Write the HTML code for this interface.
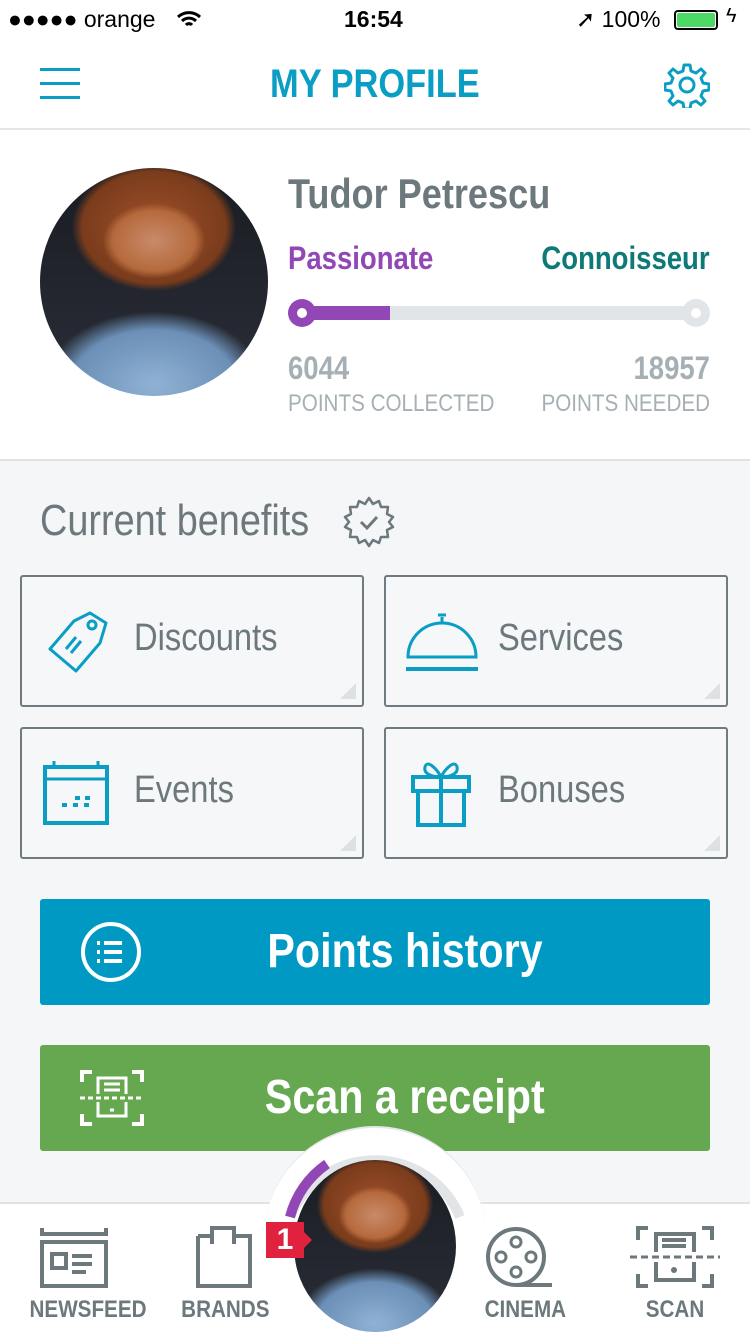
<!DOCTYPE html>
<html><head><meta charset="utf-8"><style>
*{margin:0;padding:0;box-sizing:border-box}
html,body{width:750px;height:1334px;overflow:hidden}
body{background:#f4f6f8;font-family:"Liberation Sans",sans-serif;position:relative;color:#6c787c}
.a{position:absolute}
.n{display:inline-block;transform:scaleX(.86);transform-origin:left center;white-space:nowrap}
.nr{display:inline-block;transform:scaleX(.86);transform-origin:right center;white-space:nowrap}
.nc{display:inline-block;transform:scaleX(.86);transform-origin:center;white-space:nowrap}
.sb{font-family:"Liberation Sans",sans-serif;font-size:23px;color:#000}
.av{border-radius:50%;background:radial-gradient(ellipse 30% 22% at 50% 32%,#c98a6a 0,#b56a3c 60%,transparent 75%),radial-gradient(ellipse 45% 35% at 50% 26%,#a0502a 0,#7a3c1c 70%,transparent 80%),radial-gradient(ellipse 60% 40% at 50% 95%,#8fb2d4 0,#6b8fb6 60%,transparent 80%),linear-gradient(#1a1c22,#2a2e38);overflow:hidden}
.card{position:absolute;width:344px;height:132px;border:2px solid #6f7b80;border-radius:3px;background:#f5f7f9}
.card span{position:absolute;left:112px;top:40px;font-size:38px;color:#6c787c}
.card:after{content:"";position:absolute;right:6px;bottom:6px;border-left:16px solid transparent;border-bottom:16px solid #dde1e4}
.card svg{position:absolute}
.btn{position:absolute;left:40px;width:670px;height:106px;border-radius:3px;color:#fff;font-size:48px;font-weight:bold;text-align:center;line-height:106px}
.tab{position:absolute;top:1296px;font-size:24px;color:#6c787c;text-align:center;font-weight:bold}
</style></head><body>
<div class="a" style="left:0;top:0;width:750px;height:128px;background:#fff"></div>
<!-- status bar -->
<div class="a sb" style="left:8px;top:6px">●●●●● orange</div>
<svg class="a" style="left:176px;top:10px" width="26" height="20" viewBox="0 0 26 20"><path d="M2 7a16 16 0 0 1 22 0M6 11a10 10 0 0 1 14 0M10 15a4 4 0 0 1 6 0" stroke="#000" stroke-width="3" fill="none"/></svg>
<div class="a sb" style="left:344px;top:6px;font-weight:bold">16:54</div>
<div class="a sb" style="left:576px;top:6px">➚ 100%</div>
<div class="a" style="left:674px;top:10px;width:44px;height:20px;border:2px solid #000;border-radius:4px;padding:1px"><div style="background:#4cd964;width:100%;height:100%;border-radius:2px"></div></div>
<div class="a sb" style="left:726px;top:5px;font-size:20px">ϟ</div>
<!-- nav -->
<div class="a" style="left:40px;top:68px;width:40px;height:3px;background:#0a9ec4;box-shadow:0 14px 0 #0a9ec4,0 28px 0 #0a9ec4"></div>
<div class="a" style="left:0;width:750px;top:62px;text-align:center;font-size:40px;font-weight:bold;color:#0a9ec4"><span class="nc">MY PROFILE</span></div>
<svg class="a" style="left:664px;top:62px" width="46" height="46" viewBox="0 0 46 46"><path d="M20 3h6l1 6 5 2 5-4 4 4-4 5 2 5 6 1v6l-6 1-2 5 4 5-4 4-5-4-5 2-1 6h-6l-1-6-5-2-5 4-4-4 4-5-2-5-6-1v-6l6-1 2-5-4-5 4-4 5 4 5-2z" fill="none" stroke="#0a9ec4" stroke-width="3" stroke-linejoin="round"/><circle cx="23" cy="23" r="7" fill="none" stroke="#0a9ec4" stroke-width="3"/></svg>
<!-- profile -->
<div class="a" style="left:0;top:128px;width:750px;height:333px;background:#fff;border-top:2px solid #e4e7ea;border-bottom:2px solid #e0e3e6"></div>
<div class="a av" style="left:40px;top:168px;width:228px;height:228px"></div>
<div class="a" style="left:288px;top:170px;font-size:42px;font-weight:bold;color:#6c787c"><span class="n">Tudor Petrescu</span></div>
<div class="a" style="left:288px;top:240px;font-size:32px;font-weight:bold;color:#9147b5"><span class="n">Passionate</span></div>
<div class="a" style="right:40px;top:240px;font-size:32px;font-weight:bold;color:#0e7a77"><span class="nr">Connoisseur</span></div>
<div class="a" style="left:300px;top:306px;width:396px;height:14px;background:#e2e5e8"></div>
<div class="a" style="left:300px;top:306px;width:90px;height:14px;background:#9147b5"></div>
<div class="a" style="left:288px;top:299px;width:28px;height:28px;border-radius:50%;background:#9147b5"><div style="margin:9px;width:10px;height:10px;background:#fff;border-radius:50%"></div></div>
<div class="a" style="left:682px;top:299px;width:28px;height:28px;border-radius:50%;background:#e2e5e8"><div style="margin:9px;width:10px;height:10px;background:#fff;border-radius:50%"></div></div>
<div class="a" style="left:288px;top:350px;font-size:32px;font-weight:bold;color:#a6b0b4"><span class="n">6044</span></div>
<div class="a" style="right:40px;top:350px;font-size:32px;font-weight:bold;color:#a6b0b4"><span class="nr">18957</span></div>
<div class="a" style="left:288px;top:390px;font-size:24px;color:#a6b0b4"><span class="n">POINTS COLLECTED</span></div>
<div class="a" style="right:40px;top:390px;font-size:24px;color:#a6b0b4"><span class="nr">POINTS NEEDED</span></div>
<!-- benefits -->
<div class="a" style="left:40px;top:496px;font-size:44px;color:#6c787c"><span class="n">Current benefits</span></div>
<svg class="a" style="left:342px;top:495px" width="54" height="54" viewBox="0 0 54 54"><path d="M27 3l4 6 6-3 2 6 7 0-1 7 6 3-4 5 4 5-6 3 1 7-7 0-2 6-6-3-4 6-4-6-6 3-2-6-7 0 1-7-6-3 4-5-4-5 6-3-1-7 7 0 2-6 6 3z" fill="none" stroke="#6c787c" stroke-width="2.5" stroke-linejoin="round"/><path d="M19 27l6 6 10-11" fill="none" stroke="#6c787c" stroke-width="3"/></svg>
<div class="card" style="left:20px;top:575px"><svg style="left:24px;top:32px" width="64" height="64" viewBox="0 0 64 64"><path d="M44 4l16 10-6 20-24 28-26-22 24-28z" fill="none" stroke="#0a9ec4" stroke-width="3" stroke-linejoin="round"/><circle cx="46" cy="16" r="4" fill="none" stroke="#0a9ec4" stroke-width="3"/><path d="M20 40l10-12M25 44l10-12" stroke="#0a9ec4" stroke-width="3"/></svg><span class="n">Discounts</span></div>
<div class="card" style="left:384px;top:575px"><svg style="left:18px;top:34px" width="76" height="64" viewBox="0 0 76 64"><path d="M34 4h8M38 6v6" stroke="#0a9ec4" stroke-width="3"/><path d="M4 46a34 34 0 0 1 68 0z" fill="none" stroke="#0a9ec4" stroke-width="3"/><path d="M2 58h72" stroke="#0a9ec4" stroke-width="4"/></svg><span class="n">Services</span></div>
<div class="card" style="left:20px;top:727px"><svg style="left:20px;top:32px" width="70" height="64" viewBox="0 0 70 64"><rect x="3" y="6" width="62" height="56" fill="none" stroke="#0a9ec4" stroke-width="4"/><path d="M3 18h62M12 0v8M56 0v8" stroke="#0a9ec4" stroke-width="3"/><path d="M20 44h5M31 44h5M42 44h5M33 37h5M43 37h5" stroke="#0a9ec4" stroke-width="4"/></svg><span class="n">Events</span></div>
<div class="card" style="left:384px;top:727px"><svg style="left:24px;top:30px" width="64" height="68" viewBox="0 0 64 68"><rect x="3" y="18" width="56" height="14" fill="none" stroke="#0a9ec4" stroke-width="4"/><rect x="8" y="32" width="46" height="34" fill="none" stroke="#0a9ec4" stroke-width="4"/><path d="M31 18v48" stroke="#0a9ec4" stroke-width="4"/><path d="M31 18c-4-8-14-18-16-10s10 10 16 10c6 0 18-2 16-10s-12 2-16 10" fill="none" stroke="#0a9ec4" stroke-width="3"/></svg><span class="n">Bonuses</span></div>
<!-- buttons -->
<div class="btn" style="top:899px;background:#0099c4;padding-left:60px"><span class="nc">Points history</span></div>
<svg class="a" style="left:80px;top:921px" width="62" height="62" viewBox="0 0 62 62"><circle cx="31" cy="31" r="28" fill="none" stroke="#fff" stroke-width="4"/><path d="M24 22h18M24 31h18M24 40h18" stroke="#fff" stroke-width="4"/><path d="M17 22h3M17 31h3M17 40h3" stroke="#fff" stroke-width="4"/></svg>
<div class="btn" style="top:1045px;background:#66a84f;padding-left:60px"><span class="nc">Scan a receipt</span></div>
<svg class="a" style="left:80px;top:1070px" width="64" height="56" viewBox="0 0 64 56"><path d="M2 12V2h10M52 2h10v10M2 44v10h10M52 54h10V44" fill="none" stroke="#fff" stroke-width="4"/><path d="M0 28h64" stroke="#fff" stroke-width="3" stroke-dasharray="5 3"/><path d="M18 24V8h28v16M18 32v14h28V32M24 14h16M24 20h16M30 40h4" fill="none" stroke="#fff" stroke-width="3"/></svg>
<!-- bottom tab -->
<div class="a" style="left:0;top:1202px;width:750px;height:132px;background:#fff;border-top:2px solid #e0e3e6"></div>
<div class="a" style="left:264px;top:1126px;width:222px;height:208px;border-radius:111px 111px 0 0;background:#fff;border-top:2px solid #e4e7ea"></div>
<svg class="a" style="left:270px;top:1132px" width="210" height="120" viewBox="0 0 210 120"><path d="M20 85A92 92 0 0 1 190 85" fill="none" stroke="#e2e5e8" stroke-width="10"/><path d="M20 85A92 92 0 0 1 57 32" fill="none" stroke="#9147b5" stroke-width="10"/></svg>
<div class="a av" style="left:294px;top:1160px;width:162px;height:172px"></div>
<div class="a" style="left:266px;top:1222px;width:38px;height:36px;background:#e0223f;color:#fff;font-weight:bold;font-size:30px;text-align:center;line-height:36px">1</div>
<div class="a" style="left:304px;top:1232px;border-left:8px solid #e0223f;border-top:8px solid transparent;border-bottom:8px solid transparent"></div>
<svg class="a" style="left:40px;top:1228px" width="68" height="60" viewBox="0 0 68 60"><path d="M2 0v6h64V0" fill="none" stroke="#6c787c" stroke-width="4"/><rect x="2" y="14" width="64" height="44" fill="none" stroke="#6c787c" stroke-width="4"/><rect x="12" y="26" width="14" height="14" fill="none" stroke="#6c787c" stroke-width="4"/><path d="M32 28h20M32 36h20M32 44h14" stroke="#6c787c" stroke-width="4"/></svg>
<div class="tab" style="left:20px;width:110px"><span class="nc">NEWSFEED</span></div>
<svg class="a" style="left:196px;top:1226px" width="56" height="62" viewBox="0 0 56 62"><path d="M2 10h14M40 10h14v50H2V10" fill="none" stroke="#6c787c" stroke-width="4"/><path d="M16 18V2h22v16" fill="none" stroke="#6c787c" stroke-width="4"/></svg>
<div class="tab" style="left:170px;width:110px"><span class="nc">BRANDS</span></div>
<svg class="a" style="left:486px;top:1226px" width="68" height="62" viewBox="0 0 68 62"><circle cx="30" cy="31" r="28" fill="none" stroke="#6c787c" stroke-width="4"/><circle cx="30" cy="16" r="5" fill="none" stroke="#6c787c" stroke-width="3"/><circle cx="30" cy="46" r="5" fill="none" stroke="#6c787c" stroke-width="3"/><circle cx="15" cy="31" r="5" fill="none" stroke="#6c787c" stroke-width="3"/><circle cx="45" cy="31" r="5" fill="none" stroke="#6c787c" stroke-width="3"/><path d="M30 59h36" stroke="#6c787c" stroke-width="4"/></svg>
<div class="tab" style="left:470px;width:110px"><span class="nc">CINEMA</span></div>
<svg class="a" style="left:630px;top:1226px" width="90" height="62" viewBox="0 0 90 62"><path d="M8 14V2h10M72 2h10v12M8 48v12h10M72 60h10V48" fill="none" stroke="#6c787c" stroke-width="4"/><path d="M0 31h90" stroke="#6c787c" stroke-width="3" stroke-dasharray="7 4"/><path d="M26 26V8h38v18M26 36v18h38V36M32 14h24M32 20h24" fill="none" stroke="#6c787c" stroke-width="4"/><circle cx="44" cy="44" r="3" fill="#6c787c"/></svg>
<div class="tab" style="left:620px;width:110px"><span class="nc">SCAN</span></div>
</body></html>
